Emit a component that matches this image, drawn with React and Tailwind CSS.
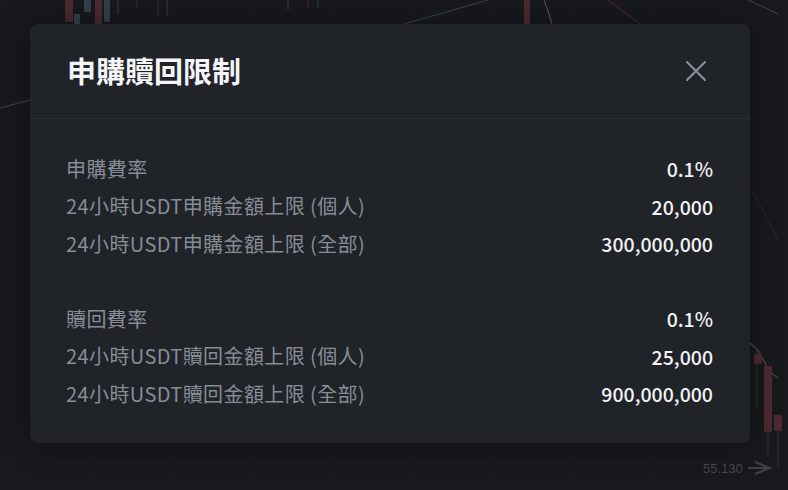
import React from "react";

const font = { fontFamily: '"Noto Sans CJK TC", "Noto Sans", sans-serif' };

const groups = [
  [
    ["申購費率", "0.1%"],
    ["24小時USDT申購金額上限 (個人)", "20,000"],
    ["24小時USDT申購金額上限 (全部)", "300,000,000"],
  ],
  [
    ["贖回費率", "0.1%"],
    ["24小時USDT贖回金額上限 (個人)", "25,000"],
    ["24小時USDT贖回金額上限 (全部)", "900,000,000"],
  ],
];

const ChartBackdrop = () => (
  <svg className="absolute inset-0" width="788" height="490" viewBox="0 0 788 490">
    {/* grid */}
    {[14, 94, 174, 254, 334, 414, 494, 574, 654, 734].map((x) => (
      <line key={x} x1={x} y1="0" x2={x} y2="490" stroke="#1c1e23" strokeWidth="1" />
    ))}
    <line x1="0" y1="462" x2="788" y2="462" stroke="#1c1e23" />
    {/* candles top-left */}
    <rect x="65" y="0" width="8" height="22" fill="#4a2a30" />
    <rect x="74" y="14" width="6" height="10" fill="#33414a" />
    <rect x="84" y="0" width="7" height="12" fill="#33414a" />
    <rect x="95" y="0" width="7" height="24" fill="#4a2a30" />
    <rect x="104" y="0" width="6" height="22" fill="#33414a" />
    <line x1="118" y1="0" x2="118" y2="14" stroke="#33414a" />
    <line x1="137" y1="0" x2="137" y2="8" stroke="#4a2a30" />
    <line x1="158" y1="0" x2="158" y2="16" stroke="#4a2a30" />
    <line x1="167" y1="0" x2="167" y2="16" stroke="#33414a" />
    <line x1="288" y1="0" x2="288" y2="10" stroke="#33414a" />
    <line x1="308" y1="0" x2="308" y2="8" stroke="#4a2a30" />
    <line x1="318" y1="0" x2="318" y2="8" stroke="#33414a" />
    <rect x="524" y="0" width="6" height="24" fill="#4a2a30" />
    {/* lines */}
    <path d="M0 108 Q 15 104 30 100" stroke="#3a4a4c" fill="none" />
    <path d="M404 24 Q 440 14 488 0" stroke="#3a4a4c" fill="none" />
    <path d="M544 0 Q 548 10 552 24" stroke="#5a5f66" fill="none" />
    <path d="M608 0 L 640 24" stroke="#5a2a30" fill="none" />
    <path d="M748 0 L 778 14" stroke="#3a4a4c" fill="none" />
    <path d="M752 190 L 778 240" stroke="#3a2328" fill="none" />
    {/* candles bottom-right */}
    <path d="M750 343 L 758 350 L 770 372 L 778 378" stroke="#5a5f66" fill="none" />
    <line x1="757" y1="350" x2="757" y2="408" stroke="#4a2a30" />
    <rect x="754" y="354" width="8" height="10" fill="#4a2a30" />
    <line x1="768" y1="366" x2="768" y2="456" stroke="#4a2a30" />
    <rect x="764" y="366" width="8" height="66" fill="#4a2a30" />
    <line x1="778" y1="414" x2="778" y2="468" stroke="#4a2a30" />
    <rect x="774" y="415" width="8" height="16" fill="#4a2a30" />
    <path d="M755 462 L 770 468 L 755 474 M 748 468 L 770 468" stroke="#3e4148" strokeWidth="2" fill="none" />
  </svg>
);

const App = () => {
  return (
    <div className="relative w-[788px] h-[490px] overflow-hidden bg-[#17191d]" style={font}>
      <ChartBackdrop />
      <div className="relative pt-[24px] pl-[30px]">
        <div className="w-[720px] h-[419px] rounded-lg bg-[#202328] shadow-[0_0_30px_rgba(0,0,0,0.35)]">
          <div className="h-[95px] flex items-center justify-between px-[37px] border-b border-[#2a2d33]">
            <h1 className="text-[29px] font-bold text-[#f4f5f7]">申購贖回限制</h1>
            <svg width="22" height="22" viewBox="0 0 22 22" className="mr-[6px]">
              <path d="M2 2 L20 20 M20 2 L2 20" stroke="#8a8e96" strokeWidth="2.2" strokeLinecap="round" />
            </svg>
          </div>
          <div className="pt-[31px] px-[36px] flex flex-col gap-[37.5px]">
            {groups.map((rows, i) => (
              <div key={i}>
                {rows.map(([label, value]) => (
                  <div key={label} className="h-[37.5px] flex items-center justify-between">
                    <span className="text-[20px] tracking-[0.4px] text-[#878c96]">{label}</span>
                    <span className="text-[19.5px] font-medium text-[#f1f2f4] pr-[1px]">{value}</span>
                  </div>
                ))}
              </div>
            ))}
          </div>
        </div>
      </div>
      <div className="absolute left-[703px] top-[459px] text-[13px] text-[#42454c]" style={{ fontFamily: '"Liberation Sans", sans-serif' }}>
        55.130
      </div>
    </div>
  );
};

export default App;
